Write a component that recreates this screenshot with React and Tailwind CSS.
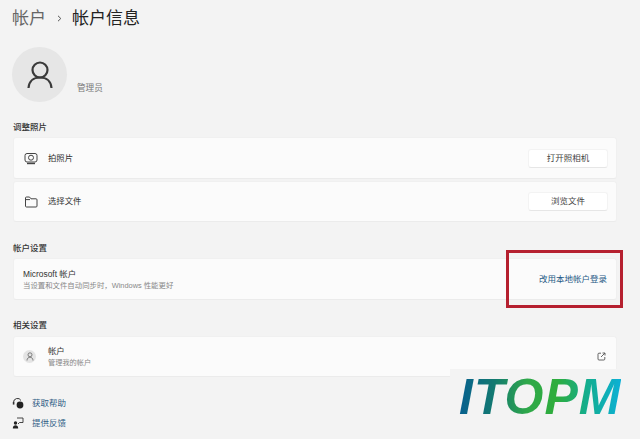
import React from "react";

function Card({ className = "", children }) {
  return (
    <div className={"ml-[13px] mr-[23px] flex items-center rounded-[3px] border border-[#f0f0f0] border-b-[#ebebeb] bg-[#fbfbfb] " + className}>
      {children}
    </div>
  );
}

function Label({ children, className = "" }) {
  return <div className={"ml-[13px] text-[8.5px] leading-[12px] font-medium text-[#333] " + className}>{children}</div>;
}

function Btn({ children }) {
  return (
    <button className="ml-auto mr-[8px] flex h-[19px] w-[80px] items-center justify-center rounded-[3px] border border-[#f3f3f3] border-b-[#e6e6e6] bg-white text-[8.5px] text-[#444]">
      {children}
    </button>
  );
}

export default function App() {
  return (
    <div className="relative h-[439px] w-[640px] overflow-hidden bg-[#f3f3f3] font-['Liberation_Sans','Noto_Sans_CJK_SC',sans-serif]">
      <div className="flex h-[37px] items-center pl-[12px] text-[17px] leading-[24px]">
        <span className="text-[#666]">帐户</span>
        <svg className="ml-[11px] mr-[10px]" width="5" height="7" viewBox="0 0 5 7" fill="none" stroke="#555" strokeWidth="1">
          <path d="M1 0.8 L3.8 3.5 L1 6.2" />
        </svg>
        <span className="text-[#222]">帐户信息</span>
      </div>

      <div className="ml-[12px] mt-[10px] flex h-[55px] items-end">
        <div className="flex h-[55px] w-[55px] items-center justify-center rounded-full bg-[#e6e6e6]">
          <svg width="28" height="30" viewBox="0 0 28 30" fill="none" stroke="#3a3a3a" strokeWidth="2.2">
            <circle cx="14" cy="10" r="7.5" />
            <path d="M2.5 28 C3 21 8 17.5 14 17.5 C20 17.5 25 21 25.5 28" />
          </svg>
        </div>
        <span className="ml-[10px] mb-[8px] text-[8.6px] leading-[12px] text-[#777]">管理员</span>
      </div>

      <Label className="mt-[19px]">调整照片</Label>
      <Card className="mt-[4px] h-[42px]">
        <svg className="ml-[10px]" width="14" height="13" viewBox="0 0 14 13" fill="none" stroke="#444" strokeWidth="1">
          <rect x="1" y="1.5" width="12" height="8.5" rx="2" />
          <circle cx="7" cy="5.7" r="2.5" />
          <path d="M3 11.5 H11" strokeWidth="1.4" />
        </svg>
        <span className="ml-[10px] text-[8.4px] text-[#333]">拍照片</span>
        <Btn>打开照相机</Btn>
      </Card>
      <Card className="mt-[2px] h-[41px]">
        <svg className="ml-[10px]" width="14" height="12" viewBox="0 0 14 12" fill="none" stroke="#444" strokeWidth="1">
          <path d="M1.5 10 V2 Q1.5 1 2.5 1 H5.5 L7 2.8 H12 Q13 2.8 13 3.8 V10 Q13 11 12 11 H2.5 Q1.5 11 1.5 10 Z" />
          <path d="M1.5 3.6 H6" />
        </svg>
        <span className="ml-[10px] text-[8.4px] text-[#333]">选择文件</span>
        <Btn>浏览文件</Btn>
      </Card>

      <Label className="mt-[20px]">帐户设置</Label>
      <Card className="mt-[4px] h-[42px] justify-between">
        <div className="ml-[9px] flex flex-col pt-[1px]">
          <span className="text-[8.4px] leading-[11px] text-[#333]">Microsoft 帐户</span>
          <span className="text-[7.4px] leading-[11px] text-[#888]">当设置和文件自动同步时，Windows 性能更好</span>
        </div>
        <span className="mr-[9px] text-[8.5px] text-[#1f5a86]">改用本地帐户登录</span>
      </Card>

      <Label className="mt-[19px]">相关设置</Label>
      <Card className="mt-[5px] h-[41px]">
        <div className="ml-[9px] flex h-[13px] w-[13px] items-center justify-center rounded-full bg-[#e4e4e4]">
          <svg width="8" height="9" viewBox="0 0 8 9" fill="none" stroke="#666" strokeWidth="0.8">
            <circle cx="4" cy="2.8" r="2" />
            <path d="M1 8.5 C1 6.5 2.4 5.2 4 5.2 C5.6 5.2 7 6.5 7 8.5" />
          </svg>
        </div>
        <div className="ml-[12px] flex flex-col">
          <span className="text-[8.4px] leading-[11px] text-[#333]">帐户</span>
          <span className="text-[7.2px] leading-[11px] text-[#888]">管理我的帐户</span>
        </div>
        <svg className="ml-auto mr-[10px]" width="9" height="9" viewBox="0 0 9 9" fill="none" stroke="#555" strokeWidth="0.9">
          <path d="M4 1.2 H2 Q1 1.2 1 2.2 V7 Q1 8 2 8 H6.8 Q7.8 8 7.8 7 V5" />
          <path d="M4 5 L8 1 M5.5 1 H8 V3.5" />
        </svg>
      </Card>

      <div className="ml-[12px] mt-[16px] flex h-[20px] items-center">
        <svg width="12" height="12" viewBox="0 0 12 12" fill="none">
          <path d="M1.5 5.5 A4 4 0 0 1 9 3.5" stroke="#333" strokeWidth="1" />
          <circle cx="8" cy="8" r="3.4" fill="#222" />
          <rect x="0.8" y="5" width="1.6" height="2.6" fill="#333" />
        </svg>
        <span className="ml-[8px] text-[8.5px] text-[#2f5d85]">获取帮助</span>
      </div>
      <div className="ml-[12px] flex h-[20px] items-center">
        <svg width="12" height="12" viewBox="0 0 12 12" fill="none">
          <circle cx="3.5" cy="6" r="1.7" fill="#222" />
          <path d="M0.8 11.5 C0.8 9 2 8.2 3.5 8.2 C5 8.2 6.2 9 6.2 11.5 Z" fill="#222" />
          <path d="M5 1 H11 V5.5 H7.5 L6 7" stroke="#333" strokeWidth="0.9" />
        </svg>
        <span className="ml-[8px] text-[8.5px] text-[#2f5d85]">提供反馈</span>
      </div>

      {/* annotation over the screenshot */}
      <div className="absolute left-[506px] top-[250px] h-[58px] w-[117px] border-[3px] border-[#b5202f]" />

      {/* watermark */}
      <div className="absolute left-[450px] top-[369px] flex h-[70px] w-[190px] items-start bg-[#f3f3f3] pl-[9px] pt-[1px]">
        <span className="bg-[linear-gradient(90deg,#07608f_0%,#137a70_22%,#2fa84a_42%,#2fad3c_60%,#14ad8a_78%,#0cb0d6_100%)] bg-clip-text text-[50px] font-bold italic leading-[54px] tracking-[1px] text-transparent">
          ITOPM
        </span>
      </div>
    </div>
  );
}
